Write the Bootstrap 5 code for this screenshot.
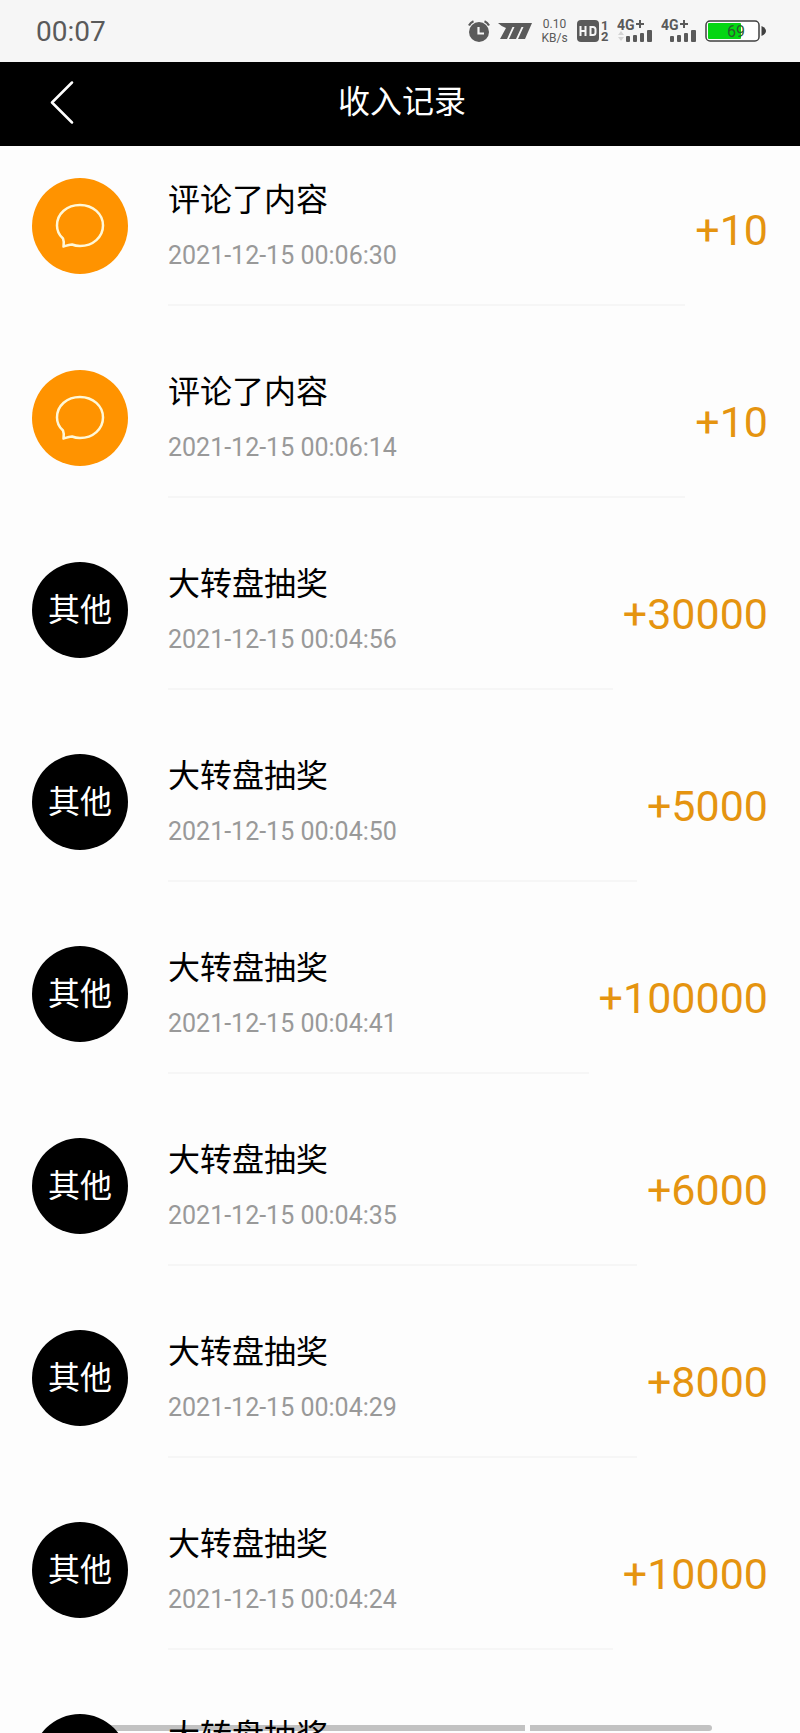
<!DOCTYPE html>
<html lang="zh-CN">
<head>
<meta charset="utf-8">
<meta name="viewport" content="width=device-width, initial-scale=1">
<title>收入记录</title>
<link href="https://cdn.jsdelivr.net/npm/bootstrap@5.3.0/dist/css/bootstrap.min.css" rel="stylesheet">
<style>
  body { font-family: Roboto, "Noto Sans CJK SC", sans-serif; background: #fdfdfd; color: #000; }
  .status-bar { height: 62px; padding: 0 34px 0 36px; background: #f6f6f6; color: #5a5a5a; }
  .status-time { font-size: 28px; line-height: 34px; padding-top: 2px; }
  .status-icons { gap: 7px; }
  .net-speed { width: 29px; font-size: 12px; line-height: 14px; text-align: center; white-space: nowrap; }
  .title-bar { height: 84px; padding: 0 32px 4px; }
  .title-bar .back-btn { width: 60px; height: 62px; color: #fff; }
  .title-bar h1 { font-size: 32px; line-height: 40px; }
  .record-list { scrollbar-width: none; }
  .record-list::-webkit-scrollbar { display: none; }
  .record { padding: 32px; background: none; }
  .avatar { width: 96px; height: 96px; font-size: 32px; }
  .avatar-comment { background: #ff9300; }
  .record-body { height: 128px; margin-left: 40px; margin-right: 10px; border-bottom: 2px solid #f6f6f6; }
  .record-title { font-size: 32px; line-height: 44px; }
  .record-time { font-size: 25px; line-height: 32px; margin-top: 18px; color: #999; }
  .amount { font-size: 43px; line-height: 104px; color: #e59410; }
  .home-bar { left: 11%; right: 11%; bottom: 2px; gap: 5px; mix-blend-mode: multiply; }
  .home-bar span { height: 6px; background: #c4c4c4; }
  .home-bar .seg-a { flex: 437; border-radius: 3px 0 0 3px; }
  .home-bar .seg-b { flex: 182; border-radius: 0 3px 3px 0; }
</style>
</head>
<body>
<div class="vh-100 d-flex flex-column overflow-hidden">
  <div class="status-bar d-flex align-items-center justify-content-between flex-shrink-0">
    <span class="status-time">00:07</span>
    <div class="status-icons d-flex align-items-center">
      <svg width="24" height="24" viewBox="0 0 24 24" fill="none" stroke="#5a5a5a" aria-label="闹钟">
        <circle cx="12" cy="13" r="10" fill="#5a5a5a" stroke="none"/>
        <path d="M2 6.500Q3.500 3.500 6.500 2.200M22 6.500Q20.500 3.500 17.500 2.200" stroke-width="2.200"/>
        <path d="M11.500 8V14.500H17" stroke="#f6f6f6" stroke-width="2.200"/>
      </svg>
      <svg width="35" height="22" viewBox="0 0 35 22" fill="#5a5a5a" aria-hidden="true">
        <path d="M0 3H34L27 19H20L25.500 7H23.500L18 19H11L16.500 7H14.500L9 19H2L8 8Q4 7 0 3Z"/>
      </svg>
      <span class="net-speed">0.10<br>KB/s</span>
      <svg width="34" height="26" viewBox="0 -1 34 26" aria-hidden="true">
        <rect x="1" y="1" width="22" height="22" rx="4" fill="#5a5a5a"/>
        <path d="M4.500 7V17M9.500 7V17M4.500 12H9.500M14.500 8V16H17Q19.500 16 19.500 13.500V10.500Q19.500 8 17 8H13.500" fill="none" stroke="#f6f6f6" stroke-width="2"/>
        <g font-family="Roboto, sans-serif" font-size="13" font-weight="700" fill="#5a5a5a"><text x="25" y="11">1</text><text x="25" y="22">2</text></g>
      </svg>
      <svg width="37" height="28" viewBox="0 -2 37 28" fill="#5a5a5a" aria-hidden="true">
        <text x="0" y="11" font-family="Roboto, sans-serif" font-size="14" font-weight="700">4G</text>
        <path d="M19 4H22V1H24V4H27V6H24V9H22V6H19Z"/>
        <path d="M1 16L4 12L7 16ZM1 18L4 22L7 18Z" fill="#d4d4d4"/>
        <rect x="9" y="17" width="4" height="6" rx="1"/><rect x="16" y="16" width="4" height="7" rx="1"/><rect x="23" y="14" width="4" height="9" rx="1"/><rect x="30" y="11" width="5" height="12" rx="1"/>
      </svg>
      <svg width="37" height="28" viewBox="0 -2 37 28" fill="#5a5a5a" aria-hidden="true">
        <text x="0" y="11" font-family="Roboto, sans-serif" font-size="14" font-weight="700">4G</text>
        <path d="M19 4H22V1H24V4H27V6H24V9H22V6H19Z"/>
        <rect x="9" y="17" width="4" height="6" rx="1"/><rect x="16" y="16" width="4" height="7" rx="1"/><rect x="23" y="14" width="4" height="9" rx="1"/><rect x="30" y="11" width="5" height="12" rx="1"/>
      </svg>
      <svg width="61" height="24" viewBox="0 0 61 24" aria-hidden="true">
        <rect x="1" y="2" width="53" height="20" rx="4" fill="#fff" stroke="#404040" stroke-width="1.500"/>
        <rect x="3" y="4" width="33" height="16" rx="1" fill="#04d612"/>
        <path d="M56.500 7Q61 9 61 12T56.500 17Z" fill="#404040"/>
        <text x="22" y="18" font-family="Roboto, sans-serif" font-size="16" fill="#2c5a2c">69</text>
      </svg>
    </div>
  </div>

  <header class="title-bar bg-black text-white d-flex align-items-center flex-shrink-0">
    <button type="button" class="back-btn btn p-0 border-0 d-flex align-items-center justify-content-center" aria-label="返回">
      <svg width="26" height="44" viewBox="0 0 26 44" fill="none" stroke="currentColor" stroke-width="2.500" stroke-linecap="round" stroke-linejoin="round"><path d="M23 2.500L3 22.500L23 42.500"/></svg>
    </button>
    <h1 class="flex-grow-1 text-center fw-normal m-0 pe-5 me-2">收入记录</h1>
  </header>

  <main class="record-list flex-grow-1 overflow-auto">
    <ul class="list-unstyled m-0" id="records"></ul>
  </main>
</div>
<div class="home-bar position-fixed d-flex"><span class="seg-a"></span><span class="seg-b"></span></div>

<script src="https://cdn.jsdelivr.net/npm/bootstrap@5.3.0/dist/js/bootstrap.bundle.min.js"></script>
<script>
  const records = [
    ['comment', '00:06:30', 10],
    ['comment', '00:06:14', 10],
    ['other', '00:04:56', 30000],
    ['other', '00:04:50', 5000],
    ['other', '00:04:41', 100000],
    ['other', '00:04:35', 6000],
    ['other', '00:04:29', 8000],
    ['other', '00:04:24', 10000],
    ['other', '', '']
  ];
  const bubble = '<svg width="50" height="46" viewBox="0 0 50 46" fill="none" stroke="#fff8d8" stroke-width="2.500" stroke-linejoin="round"><path d="M8.500 43.500C9 41 9 38 8 35.500C4 32 2 28 2 22.500C2 10.500 12 2 25 2S48 11 48 22.500S38 43 25 43C22 43 19.500 42.500 17 41.500C14 41.500 11.500 42.500 8.500 43.500Z"/></svg>';
  document.getElementById('records').innerHTML = records.map(([kind, time, amount]) => `
    <li class="record d-flex align-items-start">
      <div class="avatar rounded-circle flex-shrink-0 d-flex align-items-center justify-content-center text-white ${kind === 'comment' ? 'avatar-comment' : 'bg-black'}">${kind === 'comment' ? bubble : time ? '其他' : ''}</div>
      <div class="record-body flex-grow-1">
        <div class="record-title">${kind === 'comment' ? '评论了内容' : '大转盘抽奖'}</div>
        ${time ? `<div class="record-time">2021-12-15 ${time}</div>` : ''}
      </div>
      ${amount ? `<div class="amount">+${amount}</div>` : ''}
    </li>`).join('');
</script>
</body>
</html>
